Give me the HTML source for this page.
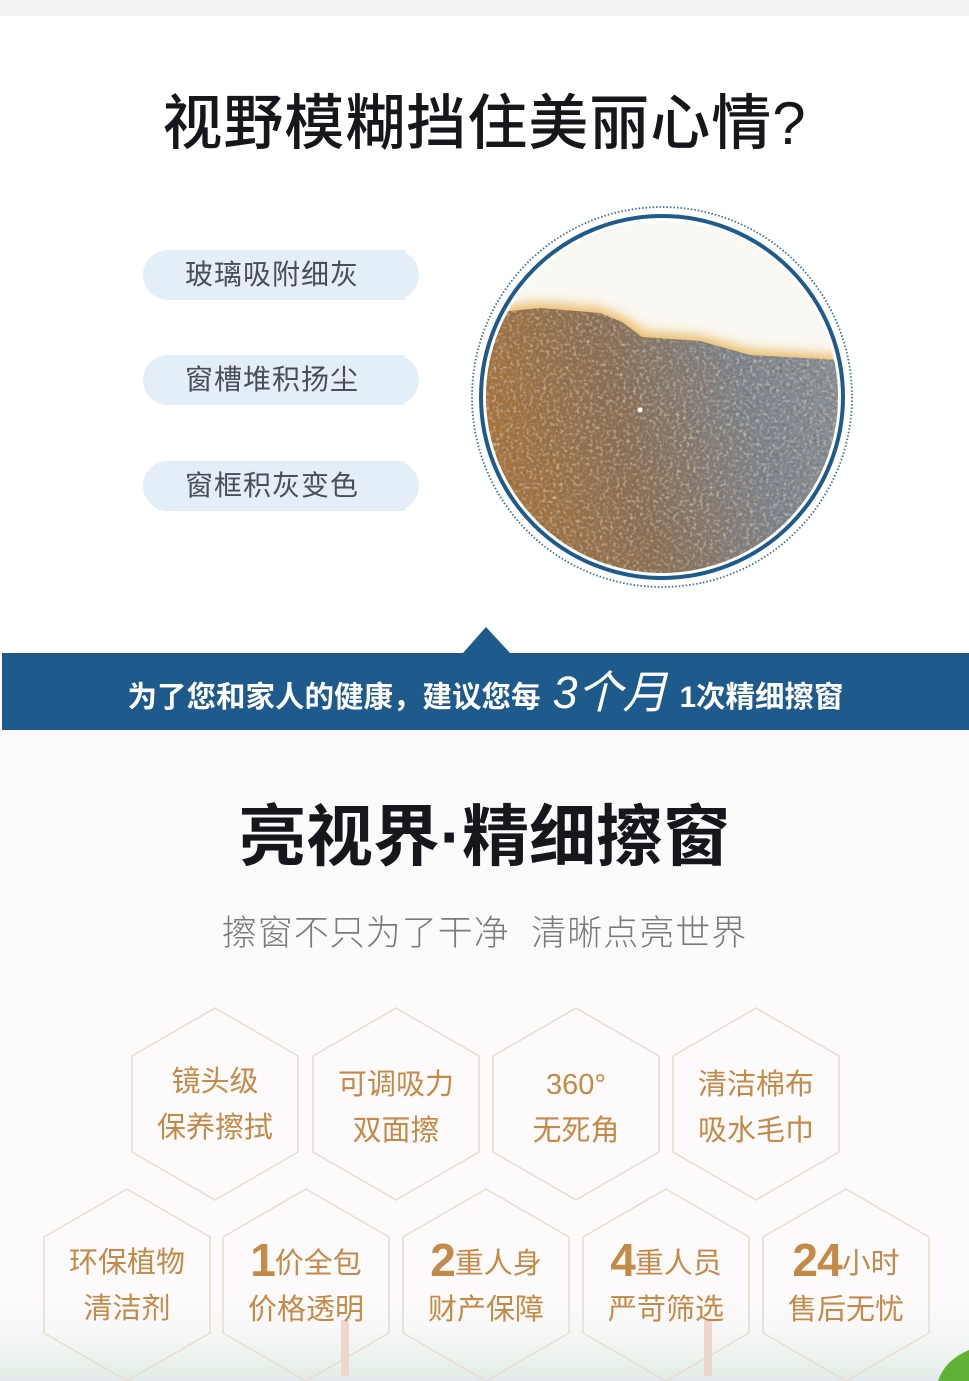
<!DOCTYPE html>
<html><head><meta charset="utf-8">
<style>
*{margin:0;padding:0;box-sizing:border-box}
body{width:969px;height:1381px;overflow:hidden;background:#fff;font-family:"Liberation Sans","Noto Sans CJK SC",sans-serif;position:relative}
.abs{position:absolute}
.t1{left:0;width:969px;top:86px;text-align:center;font-size:60px;font-weight:500;color:#15171c;line-height:76px;letter-spacing:1px}
.bub{position:absolute;left:143px;width:262px;height:50px;background:#e3eef9;border-radius:25px 0 0 25px;font-size:28px;color:#4a4f57;line-height:50px;padding-left:42px;letter-spacing:1px}
.bub:after{content:"";position:absolute;right:-14px;top:0;width:28px;height:50px;background:#e3eef9;border-radius:0 25px 25px 0}
.band{left:2px;top:653px;width:967px;height:77px;background:#1f5a8c;color:#fff;font-weight:bold;font-size:29.5px;line-height:77px;text-align:center}
.band i{font-size:45px;font-weight:normal;font-style:italic;margin:0 12px;position:relative;top:1px}
.lower{left:0;top:730px;width:969px;height:651px;background:#fcfafb}
.t2{left:0;width:969px;top:794px;text-align:center;font-size:67px;font-weight:bold;color:#15171c;line-height:88px}
.sub{left:0;width:969px;top:910px;text-align:center;font-size:35px;color:#7b7b7d;line-height:48px;font-weight:300;letter-spacing:1px}
.hx{position:absolute;width:166px;text-align:center;color:#c48a48;font-size:29px;line-height:46px}
.hx b{font-size:46px;font-weight:bold;vertical-align:-3px;letter-spacing:-1px}
</style></head><body>
<div class="abs" style="left:0;top:0;width:969px;height:16px;background:#f2f2f2"></div>
<div class="abs t1">视野模糊挡住美丽心情?</div>
<div class="bub" style="top:250px">玻璃吸附细灰</div>
<div class="bub" style="top:355px">窗槽堆积扬尘</div>
<div class="bub" style="top:461px">窗框积灰变色</div>
<svg class="abs" style="left:0;top:0" width="969" height="730">
<defs>
<clipPath id="c"><circle cx="662" cy="397" r="176"/></clipPath>
<clipPath id="d"><path d="M480 314 L540 308 L600 313 L622 322 L642 337 L700 341 L750 355 L840 360 L840 600 L480 600Z"/></clipPath>
<linearGradient id="g" x1="0" y1="0.3" x2="1" y2="0.1">
<stop offset="0" stop-color="#a8743c"/><stop offset="0.35" stop-color="#8a6f55"/><stop offset="0.7" stop-color="#7b8590"/><stop offset="1" stop-color="#8a949c"/></linearGradient>
<filter id="n" x="0" y="0" width="100%" height="100%"><feTurbulence type="fractalNoise" baseFrequency="0.3" numOctaves="2" seed="3"/><feColorMatrix values="0 0 0 0 0.2  0 0 0 0 0.15  0 0 0 0 0.1  0 0 0 2.2 -1.05"/></filter>
<filter id="l" x="0" y="0" width="100%" height="100%"><feTurbulence type="fractalNoise" baseFrequency="0.3" numOctaves="2" seed="9"/><feColorMatrix values="0 0 0 0 0.88  0 0 0 0 0.78  0 0 0 0 0.62  0 0 0 2.2 -1.05"/></filter>
<filter id="b"><feGaussianBlur stdDeviation="6"/></filter>
</defs>
<circle cx="662" cy="397" r="190" fill="none" stroke="#3d6d9c" stroke-width="1.8" stroke-dasharray="1.5 2"/>
<circle cx="662" cy="397" r="181" fill="none" stroke="#1f5a8c" stroke-width="4"/>
<g clip-path="url(#c)">
<rect x="480" y="215" width="370" height="380" fill="#faf8f2"/>
<path d="M480 310 L540 303 L600 308 L625 318 L645 332 L700 336 L750 350 L840 356 L840 600 L480 600Z" fill="#e9b860" filter="url(#b)"/>
<g clip-path="url(#d)">
<rect x="480" y="300" width="370" height="300" fill="url(#g)"/>
<rect x="480" y="300" width="370" height="300" filter="url(#l)" opacity="0.7"/>
<rect x="480" y="300" width="370" height="300" filter="url(#n)" opacity="0.8"/>
</g>
<circle cx="640" cy="410" r="2.5" fill="#fff"/>
</g>
<polygon points="463,653 486,627 510,653" fill="#1f5a8c"/>
</svg>
<div class="abs band">为了您和家人的健康，建议您每<i>3个月</i>1次精细擦窗</div>
<div class="abs lower"></div>
<svg class="abs" style="left:0;top:1290px" width="969" height="91">
<defs><linearGradient id="w" x1="0" y1="0" x2="0" y2="1"><stop offset="0" stop-color="#fcfafb" stop-opacity="0"/><stop offset="1" stop-color="#dfece4"/></linearGradient></defs>
<rect width="969" height="91" fill="url(#w)"/>
<rect x="341" y="30" width="8" height="61" fill="#efd5d0"/>
<rect x="704" y="30" width="8" height="61" fill="#efd5d0"/>
<rect y="86" width="969" height="5" fill="#e3e9ec"/>
<path d="M969 60 Q945 70 938 91 L969 91Z" fill="#5fb236"/>
</svg>
<div class="abs t2">亮视界·精细擦窗</div>
<div class="abs sub">擦窗不只为了干净&nbsp;&nbsp;清晰点亮世界</div>
<svg class="abs" style="left:0;top:0;pointer-events:none" width="969" height="1381" fill="none" stroke="#e8dccd" stroke-width="1.5">
<g id="h1"><polygon points="215,1008 298,1056 298,1152 215,1200 132,1152 132,1056"/></g>
<use href="#h1" x="181"/><use href="#h1" x="361"/><use href="#h1" x="541"/>
<use href="#h1" x="-88" y="181"/><use href="#h1" x="91" y="181"/><use href="#h1" x="271" y="181"/><use href="#h1" x="451" y="181"/><use href="#h1" x="631" y="181"/>
</svg>
<div class="hx" style="left:132px;top:1059px">镜头级<br>保养擦拭</div>
<div class="hx" style="left:313px;top:1062px">可调吸力<br>双面擦</div>
<div class="hx" style="left:493px;top:1062px">360°<br>无死角</div>
<div class="hx" style="left:673px;top:1062px">清洁棉布<br>吸水毛巾</div>
<div class="hx" style="left:44px;top:1240px">环保植物<br>清洁剂</div>
<div class="hx" style="left:223px;top:1237px"><b>1</b>价全包<br>价格透明</div>
<div class="hx" style="left:403px;top:1237px"><b>2</b>重人身<br>财产保障</div>
<div class="hx" style="left:583px;top:1237px"><b>4</b>重人员<br>严苛筛选</div>
<div class="hx" style="left:763px;top:1237px"><b>24</b>小时<br>售后无忧</div>
</body></html>
